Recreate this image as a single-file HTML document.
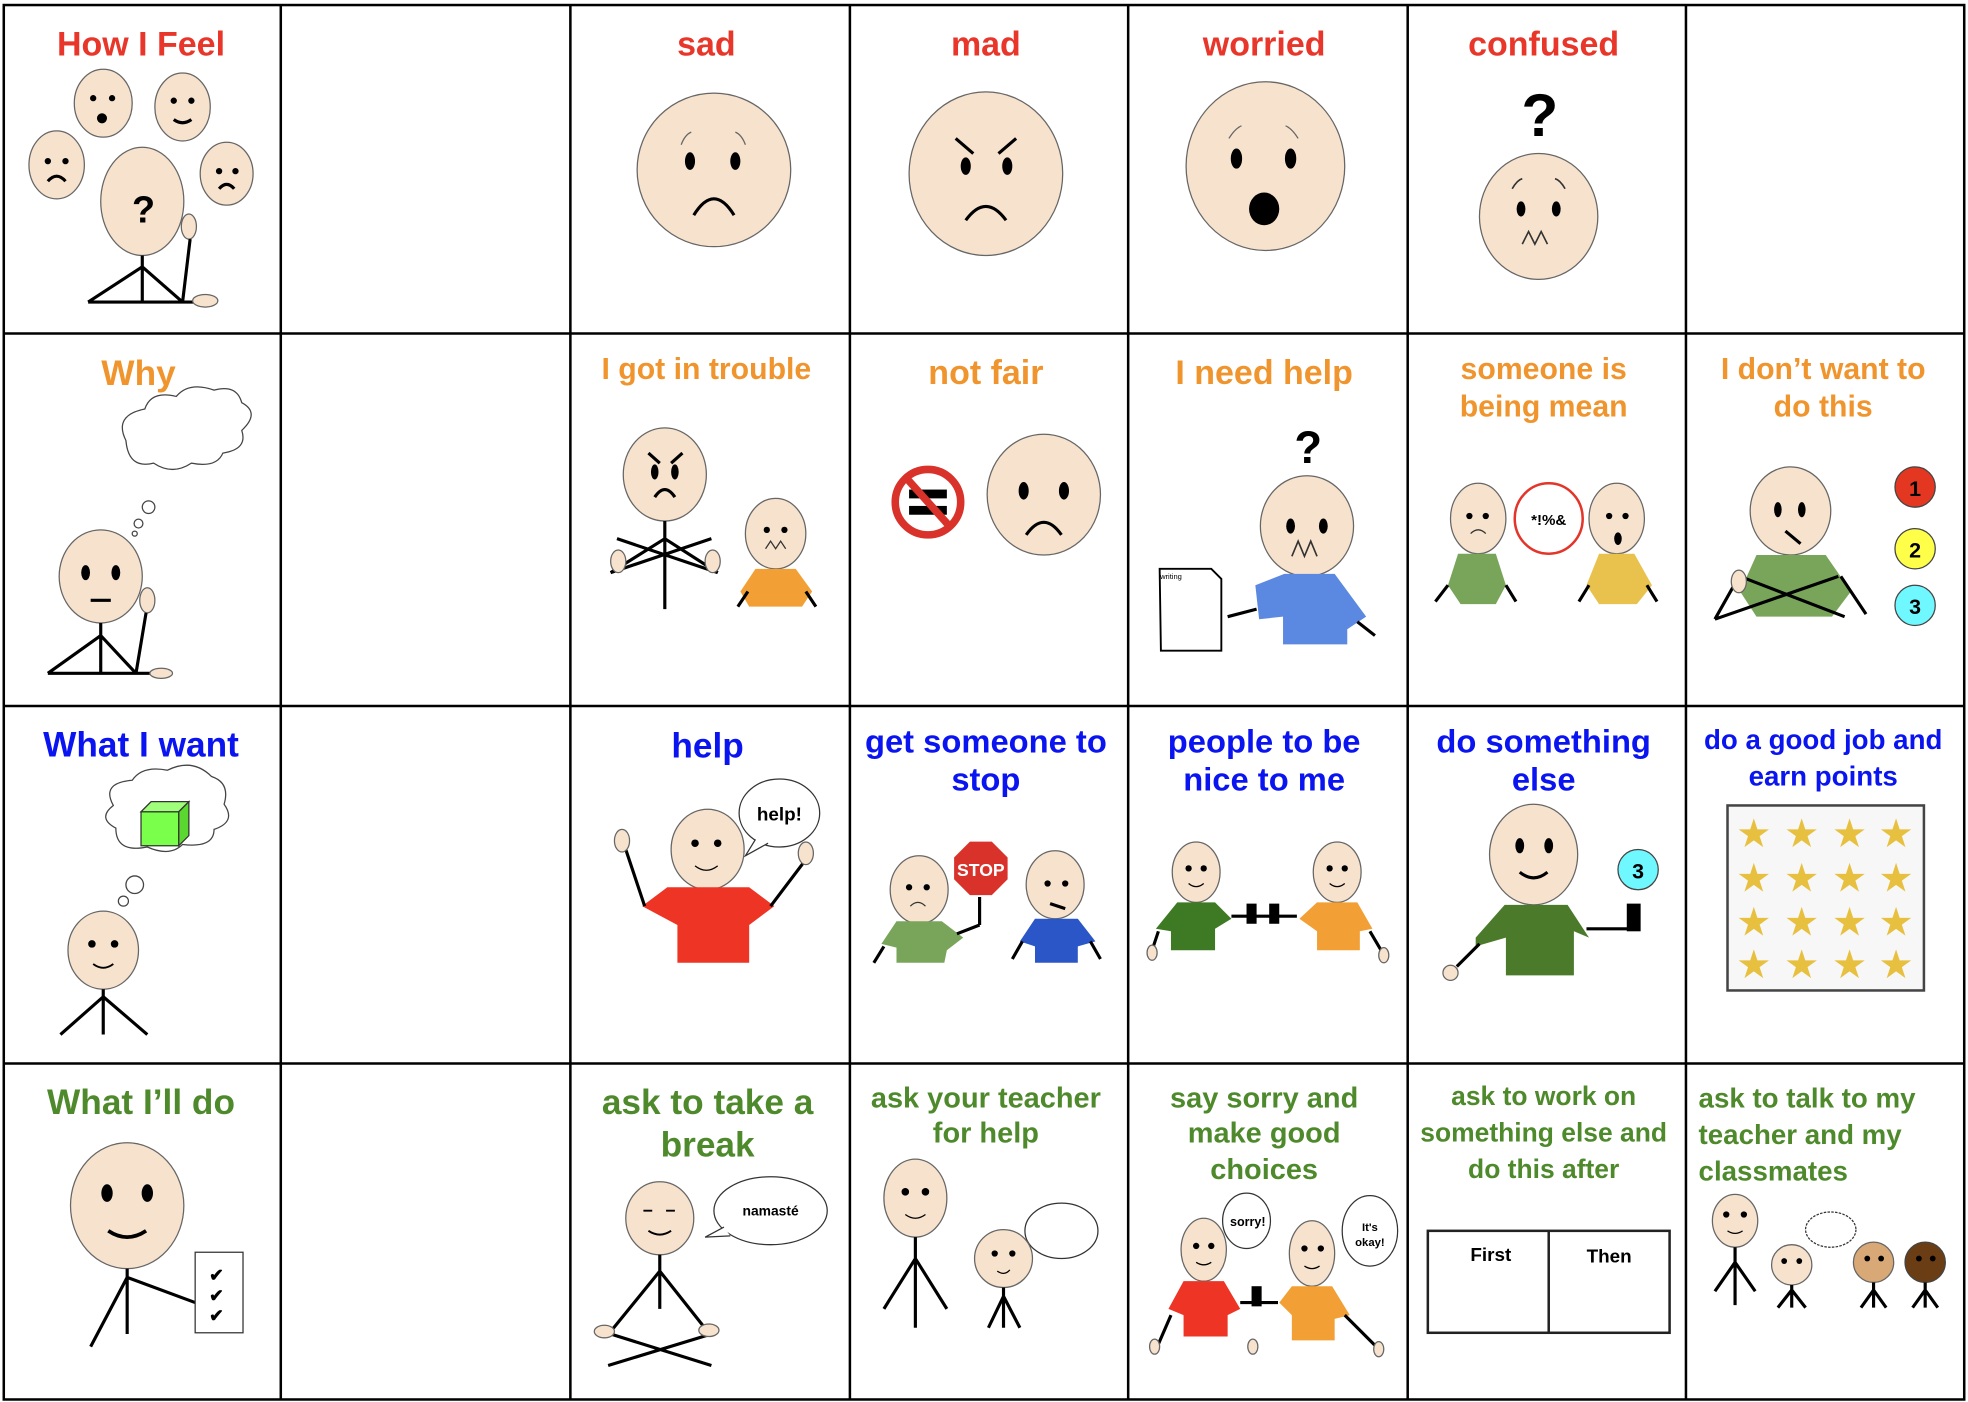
<!DOCTYPE html>
<html><head><meta charset="utf-8"><style>
html,body{margin:0;padding:0;background:#fff}
svg{display:block}
text{font-family:"Liberation Sans",sans-serif;font-weight:bold;text-anchor:middle}
.r{fill:#e8372a;font-size:27px}.o{fill:#f0952e;font-size:24px}.b{fill:#0a14f0;font-size:26px}.g{fill:#4e8a2c;font-size:25px}
.f{fill:#f7e3cd;stroke:#666;stroke-width:1}
.l{stroke:#000;stroke-width:2.5;fill:none}
</style></head><body>
<svg width="1968" height="1402" viewBox="0 0 1563 1114" preserveAspectRatio="none" xmlns="http://www.w3.org/2000/svg">
<rect width="1563" height="1114" fill="#fff"/>
<g stroke="#000" stroke-width="2" fill="none">
<rect x="3" y="4" width="1557" height="1108"/>
<line x1="223" y1="4" x2="223" y2="1112"/><line x1="453" y1="4" x2="453" y2="1112"/><line x1="675" y1="4" x2="675" y2="1112"/><line x1="896" y1="4" x2="896" y2="1112"/><line x1="1118" y1="4" x2="1118" y2="1112"/><line x1="1339" y1="4" x2="1339" y2="1112"/>
<line x1="3" y1="265" x2="1560" y2="265"/><line x1="3" y1="561" x2="1560" y2="561"/><line x1="3" y1="845" x2="1560" y2="845"/>
</g>
<!-- Row 1 -->
<text class="r" x="112" y="44">How I Feel</text>
<ellipse class="f" cx="82" cy="82" rx="23" ry="27"/><circle cx="74" cy="78" r="2.5"/><circle cx="89" cy="78" r="2.5"/><circle cx="81" cy="94" r="4"/>
<ellipse class="f" cx="145" cy="85" rx="22" ry="27"/><circle cx="138" cy="80" r="2.5"/><circle cx="152" cy="80" r="2.5"/><path d="M138 95 q7 5 14 0" class="l" stroke-width="1"/>
<ellipse class="f" cx="45" cy="131" rx="22" ry="27"/><circle cx="38" cy="128" r="2.5"/><circle cx="52" cy="128" r="2.5"/><path d="M38 144 q7 -8 14 0" class="l" stroke-width="1"/>
<ellipse class="f" cx="180" cy="138" rx="21" ry="25"/><circle cx="174" cy="136" r="2.5"/><circle cx="187" cy="136" r="2.5"/><path d="M174 150 q6 -7 12 0" class="l" stroke-width="1"/>
<ellipse class="f" cx="113" cy="160" rx="33" ry="43"/><text x="114" y="177" style="font-size:30px;fill:#000">?</text>
<ellipse class="f" cx="150" cy="180" rx="6" ry="10"/>
<path class="l" d="M113 203 V240 M113 212 L70 240 M113 212 L145 240 M70 240 H160 M145 240 L151 190"/><ellipse class="f" cx="163" cy="239" rx="10" ry="5"/>
<text class="r" x="561" y="44">sad</text>
<circle class="f" cx="567" cy="135" r="61"/><ellipse cx="548" cy="128" rx="4" ry="7"/><ellipse cx="584" cy="128" rx="4" ry="7"/><path class="l" d="M551 171 q16 -26 32 0" stroke-width="2"/><path d="M541 115 q3 -8 8 -10 M584 105 q5 2 8 10" stroke="#666" fill="none"/>
<text class="r" x="783" y="44">mad</text>
<ellipse class="f" cx="783" cy="138" rx="61" ry="65"/><ellipse cx="767" cy="132" rx="4" ry="7"/><ellipse cx="800" cy="132" rx="4" ry="7"/><path class="l" d="M767 175 q16 -22 32 0" stroke-width="2"/><path class="l" d="M759 110 L773 122 M807 110 L793 122" stroke-width="1.5"/>
<text class="r" x="1004" y="44">worried</text>
<ellipse class="f" cx="1005" cy="132" rx="63" ry="67"/><ellipse cx="982" cy="126" rx="4.5" ry="8"/><ellipse cx="1025" cy="126" rx="4.5" ry="8"/><ellipse cx="1004" cy="166" rx="12" ry="13"/><path d="M976 110 q5 -8 10 -10 M1021 100 q5 2 10 10" stroke="#666" fill="none"/>
<text class="r" x="1226" y="44">confused</text>
<text x="1223" y="108" style="font-size:48px;fill:#000">?</text>
<ellipse class="f" cx="1222" cy="172" rx="47" ry="50"/><ellipse cx="1208" cy="166" rx="3.5" ry="6"/><ellipse cx="1236" cy="166" rx="3.5" ry="6"/><path d="M1209 194 l5 -10 l5 10 l5 -10 l5 10 M1201 150 q4 -7 8 -8 M1235 142 q4 1 8 8" stroke="#333" stroke-width="1.3" fill="none"/>
<!-- Row 2 -->
<text class="o" x="110" y="306" style="font-size:28px">Why</text>
<path d="M100 350 q-10 -20 15 -25 q5 -15 25 -10 q10 -12 30 -5 q18 -5 22 10 q15 8 0 22 q5 15 -15 18 q-5 12 -25 8 q-15 10 -30 0 q-20 5 -22 -18z" fill="#fff" stroke="#444"/>
<circle cx="118" cy="403" r="5" fill="#fff" stroke="#444"/><circle cx="110" cy="416" r="3.5" fill="#fff" stroke="#444"/><circle cx="107" cy="424" r="2" fill="#fff" stroke="#444"/>
<ellipse class="f" cx="80" cy="458" rx="33" ry="37"/><ellipse cx="68" cy="455" rx="3.5" ry="6"/><ellipse cx="92" cy="455" rx="3.5" ry="6"/><path class="l" d="M72 477 H88" stroke-width="2"/>
<ellipse class="f" cx="117" cy="477" rx="6" ry="10"/>
<path class="l" d="M80 495 V535 M80 505 L38 535 M80 505 L108 535 M38 535 H125 M108 535 L116 487"/><ellipse class="f" cx="128" cy="535" rx="9" ry="4"/>
<text class="o" x="561" y="301">I got in trouble</text>
<ellipse class="f" cx="528" cy="377" rx="33" ry="37"/><ellipse cx="520" cy="375" rx="3" ry="6"/><ellipse cx="536" cy="375" rx="3" ry="6"/><path class="l" d="M520 395 q8 -12 16 0 M515 360 l9 8 M542 360 l-9 8" stroke-width="1.5"/>
<path class="l" d="M528 414 V484 M528 428 L485 455 L565 428 M528 428 L570 455 L490 428"/><ellipse class="f" cx="491" cy="446" rx="6" ry="9"/><ellipse class="f" cx="566" cy="446" rx="6" ry="9"/>
<ellipse class="f" cx="616" cy="424" rx="24" ry="28"/><circle cx="609" cy="421" r="2.5"/><circle cx="623" cy="421" r="2.5"/><path d="M608 436 l4 -6 l4 6 l4 -6 l4 6" stroke="#333" fill="none"/>
<polygon points="600,452 632,452 645,470 637,482 630,482 630,482 600,482 595,482 588,470" fill="#f2a035"/><path class="l" d="M594 470 L586 482 M640 470 L648 482" stroke-width="2"/>
<text class="o" x="783" y="305" style="font-size:27px">not fair</text>
<circle cx="737" cy="399" r="26" fill="#fff" stroke="#d8322b" stroke-width="6"/><rect x="722" y="389" width="30" height="7"/><rect x="722" y="402" width="30" height="7"/><line x1="720" y1="380" x2="754" y2="418" stroke="#d8322b" stroke-width="6"/>
<ellipse class="f" cx="829" cy="393" rx="45" ry="48"/><ellipse cx="813" cy="390" rx="4" ry="7"/><ellipse cx="845" cy="390" rx="4" ry="7"/><path class="l" d="M815 425 q14 -20 28 0" stroke-width="2"/>
<text class="o" x="1004" y="305" style="font-size:27px">I need help</text>
<text x="1039" y="368" style="font-size:36px;fill:#000">?</text>
<ellipse class="f" cx="1038" cy="418" rx="37" ry="40"/><ellipse cx="1025" cy="418" rx="3.5" ry="6"/><ellipse cx="1051" cy="418" rx="3.5" ry="6"/><path d="M1026 442 l5 -12 l5 12 l5 -12 l5 12" stroke="#333" stroke-width="1.3" fill="none"/>
<polygon points="1020,456 1060,456 1085,490 1070,500 1070,512 1019,512 1019,490 1000,492 997,465" fill="#5b88e0"/>
<path class="l" d="M975 490 L998 484 M1078 494 L1092 505"/>
<path d="M921 452 H962 L970 460 V517 H922z" fill="#fff" stroke="#000" stroke-width="1.5"/><text x="930" y="460" style="font-size:6px;font-weight:normal;fill:#000">writing</text>
<text class="o" x="1226" y="301">someone is</text><text class="o" x="1226" y="331">being mean</text>
<ellipse class="f" cx="1174" cy="412" rx="22" ry="28"/><circle cx="1167" cy="410" r="2.5"/><circle cx="1180" cy="410" r="2.5"/><path d="M1168 424 q6 -6 12 0" stroke="#333" fill="none"/>
<polygon points="1158,440 1188,440 1196,465 1188,480 1160,480 1150,465" fill="#79a55a"/><path class="l" d="M1150 465 L1140 478 M1196 465 L1204 478" stroke-width="2"/>
<ellipse cx="1230" cy="412" rx="27" ry="28" fill="#fff" stroke="#e3352a" stroke-width="2"/><text x="1230" y="417" style="font-size:12px;fill:#000">*!%&amp;</text>
<ellipse class="f" cx="1284" cy="412" rx="22" ry="28"/><circle cx="1278" cy="410" r="2.5"/><circle cx="1291" cy="410" r="2.5"/><ellipse cx="1285" cy="428" rx="3" ry="5"/>
<polygon points="1270,440 1298,440 1312,465 1300,480 1270,480 1260,465" fill="#e8c24d"/><path class="l" d="M1262 465 L1254 478 M1308 465 L1316 478" stroke-width="2"/>
<text class="o" x="1448" y="301">I don’t want to</text><text class="o" x="1448" y="331">do this</text>
<ellipse class="f" cx="1422" cy="406" rx="32" ry="35"/><ellipse cx="1412" cy="405" rx="3" ry="6"/><ellipse cx="1431" cy="405" rx="3" ry="6"/><path class="l" d="M1418 422 L1430 432" stroke-width="2"/>
<polygon points="1395,441 1450,441 1470,470 1455,490 1395,490 1382,470" fill="#79a55a"/>
<path class="l" d="M1382 458 L1465 490 M1460 458 L1362 492 M1362 492 L1380 460 M1462 458 L1482 488"/><ellipse class="f" cx="1381" cy="462" rx="6" ry="9"/>
<circle cx="1521" cy="387" r="16" fill="#e33722" stroke="#444"/><text x="1521" y="394" style="font-size:17px;fill:#000">1</text>
<circle cx="1521" cy="436" r="16" fill="#ffff4a" stroke="#444"/><text x="1521" y="443" style="font-size:17px;fill:#000">2</text>
<circle cx="1521" cy="481" r="16" fill="#6ff8ff" stroke="#444"/><text x="1521" y="488" style="font-size:17px;fill:#000">3</text>
<!-- Row 3 -->
<text class="b" x="112" y="601" style="font-size:28px">What I want</text>
<path d="M90 640 q-10 -18 15 -20 q8 -12 28 -8 q20 -10 35 5 q15 5 10 22 q10 14 -8 20 q0 15 -25 12 q-10 10 -28 2 q-25 5 -25 -15 q-15 -8 -2 -18z" fill="#fff" stroke="#444"/>
<polygon points="112,645 142,645 142,672 112,672" fill="#7aff4a" stroke="#333"/><polygon points="112,645 120,637 150,637 142,645" fill="#9fff7a" stroke="#333"/><polygon points="142,645 150,637 150,664 142,672" fill="#5bd830" stroke="#333"/>
<circle cx="107" cy="703" r="7" fill="#fff" stroke="#444"/><circle cx="98" cy="716" r="4" fill="#fff" stroke="#444"/>
<ellipse class="f" cx="82" cy="755" rx="28" ry="31"/><circle cx="73" cy="750" r="3"/><circle cx="91" cy="750" r="3"/><path d="M74 766 q8 6 16 0" stroke="#000" stroke-width="1.5" fill="none"/>
<path class="l" d="M82 786 V822 M82 792 L48 822 M82 792 L117 822" stroke-width="2"/>
<text class="b" x="562" y="602" style="font-size:28px">help</text>
<ellipse cx="619" cy="646" rx="32" ry="27" fill="#fff" stroke="#333"/><path d="M600 667 L592 680 L610 670" fill="#fff" stroke="#333"/><text x="619" y="652" style="font-size:15px;fill:#000">help!</text>
<ellipse class="f" cx="562" cy="675" rx="29" ry="32"/><circle cx="552" cy="670" r="3"/><circle cx="570" cy="670" r="3"/><path d="M552 688 q9 7 18 0" stroke="#000" fill="none"/>
<polygon points="530,705 595,705 615,720 595,735 595,765 538,765 538,735 510,720" fill="#ee3424"/>
<path class="l" d="M512 720 L497 675 M612 720 L640 683"/><ellipse class="f" cx="494" cy="668" rx="6" ry="9"/><ellipse class="f" cx="640" cy="678" rx="6" ry="9"/>
<text class="b" x="783" y="598">get someone to</text><text class="b" x="783" y="628">stop</text>
<ellipse class="f" cx="730" cy="707" rx="23" ry="27"/><circle cx="722" cy="705" r="2.5"/><circle cx="736" cy="705" r="2.5"/><path d="M723 720 q6 -6 12 0" stroke="#333" fill="none"/>
<polygon points="712,732 748,732 765,745 752,755 750,765 712,765 712,753 700,750" fill="#79a55a"/><path class="l" d="M702 752 L694 765 M760 742 L778 735 M778 710 V735" stroke-width="2"/>
<polygon points="770,668 788,668 801,681 801,699 788,712 770,712 757,699 757,681" fill="#d8322b" stroke="#fff" stroke-width="1.5"/><text x="779" y="696" style="font-size:14px;fill:#fff">STOP</text>
<ellipse class="f" cx="838" cy="703" rx="23" ry="27"/><circle cx="832" cy="702" r="2.5"/><circle cx="846" cy="702" r="2.5"/><path class="l" d="M834 718 L846 722" stroke-width="1.5"/>
<polygon points="822,730 856,730 870,748 856,752 856,765 822,765 822,752 810,748" fill="#2a56c8"/><path class="l" d="M812 748 L804 762 M866 748 L874 762" stroke-width="2"/>
<text class="b" x="1004" y="598">people to be</text><text class="b" x="1004" y="628">nice to me</text>
<ellipse class="f" cx="950" cy="693" rx="19" ry="24"/><circle cx="944" cy="690" r="2.5"/><circle cx="956" cy="690" r="2.5"/><path d="M944 702 q6 5 12 0" stroke="#000" fill="none"/>
<polygon points="935,717 965,717 978,730 965,738 965,755 930,755 930,740 918,738" fill="#3e7a23"/>
<ellipse class="f" cx="1062" cy="693" rx="19" ry="24"/><circle cx="1056" cy="690" r="2.5"/><circle cx="1068" cy="690" r="2.5"/><path d="M1056 702 q6 5 12 0" stroke="#000" fill="none"/>
<polygon points="1046,717 1078,717 1090,738 1080,740 1080,755 1046,755 1046,740 1032,730" fill="#f2a035"/>
<path class="l" d="M978 728 H1030 M920 740 L915 755 M1088 740 L1098 757" stroke-width="2"/><rect x="990" y="718" width="8" height="16"/><rect x="1008" y="718" width="8" height="16"/>
<ellipse class="f" cx="915" cy="757" rx="4" ry="6"/><ellipse class="f" cx="1099" cy="759" rx="4" ry="6"/>
<text class="b" x="1226" y="598">do something</text><text class="b" x="1226" y="628">else</text>
<ellipse class="f" cx="1218" cy="679" rx="35" ry="40"/><ellipse cx="1207" cy="672" rx="3.5" ry="6"/><ellipse cx="1230" cy="672" rx="3.5" ry="6"/><path d="M1207 693 q11 9 22 0" stroke="#000" stroke-width="2.5" fill="none"/>
<polygon points="1195,719 1245,719 1262,745 1250,740 1250,775 1196,775 1196,745 1172,752 1172,745" fill="#4c7a2b"/>
<path class="l" d="M1175 750 L1157 768 M1260 738 H1295" stroke-width="2"/><rect x="1292" y="718" width="11" height="22"/><ellipse class="f" cx="1152" cy="773" rx="6" ry="6"/>
<circle cx="1301" cy="691" r="16" fill="#6ff8ff" stroke="#444"/><text x="1301" y="698" style="font-size:17px;fill:#000">3</text>
<text class="b" x="1448" y="595" style="font-size:22px">do a good job and</text><text class="b" x="1448" y="624" style="font-size:22px">earn points</text>
<rect x="1372" y="640" width="156" height="147" fill="#f7f7f7" stroke="#444" stroke-width="2"/>
<g fill="#e8c040" font-size="28" style="font-family:'DejaVu Sans',sans-serif">
<text x="1393" y="672">★</text><text x="1431" y="672">★</text><text x="1469" y="672">★</text><text x="1506" y="672">★</text>
<text x="1393" y="707">★</text><text x="1431" y="707">★</text><text x="1469" y="707">★</text><text x="1506" y="707">★</text>
<text x="1393" y="742">★</text><text x="1431" y="742">★</text><text x="1469" y="742">★</text><text x="1506" y="742">★</text>
<text x="1393" y="776">★</text><text x="1431" y="776">★</text><text x="1469" y="776">★</text><text x="1506" y="776">★</text></g>
<!-- Row 4 -->
<text class="g" x="112" y="885" style="font-size:28px">What I’ll do</text>
<ellipse class="f" cx="101" cy="958" rx="45" ry="50"/><ellipse cx="85" cy="948" rx="4.5" ry="7"/><ellipse cx="117" cy="948" rx="4.5" ry="7"/><path d="M86 978 q15 10 30 0" stroke="#000" stroke-width="3" fill="none"/>
<path class="l" d="M101 1008 V1060 M101 1015 L72 1070 M101 1015 L155 1035"/>
<rect x="155" y="995" width="38" height="64" fill="#fff" stroke="#333"/><text x="172" y="1018" style="font-size:14px;fill:#000">✔</text><text x="172" y="1034" style="font-size:14px;fill:#000">✔</text><text x="172" y="1050" style="font-size:14px;fill:#000">✔</text>
<text class="g" x="562" y="885" style="font-size:28px">ask to take a</text><text class="g" x="562" y="919" style="font-size:28px">break</text>
<ellipse cx="612" cy="962" rx="45" ry="27" fill="#fff" stroke="#333"/><path d="M575 975 L560 983 L580 982" fill="#fff" stroke="#333"/><text x="612" y="966" style="font-size:11px;fill:#000">namasté</text>
<ellipse class="f" cx="524" cy="968" rx="27" ry="29"/><path d="M511 962 h7 M529 962 h7 M515 978 q9 6 18 0" stroke="#000" stroke-width="1.5" fill="none"/>
<path class="l" d="M524 997 V1040 M524 1010 L485 1058 M524 1010 L562 1058 M485 1060 L565 1085 M565 1060 L483 1085" stroke-width="2.5"/><ellipse class="f" cx="480" cy="1058" rx="8" ry="5"/><ellipse class="f" cx="563" cy="1057" rx="8" ry="5"/>
<text class="g" x="783" y="880" style="font-size:23px">ask your teacher</text><text class="g" x="783" y="908" style="font-size:23px">for help</text>
<ellipse class="f" cx="727" cy="952" rx="25" ry="31"/><circle cx="719" cy="947" r="3"/><circle cx="735" cy="947" r="3"/><path d="M719 965 q8 6 16 0" stroke="#000" fill="none"/>
<path class="l" d="M727 983 V1055 M727 1000 L702 1040 M727 1000 L752 1040" stroke-width="1.5"/>
<ellipse cx="843" cy="978" rx="29" ry="22" fill="#fff" stroke="#333"/>
<circle class="f" cx="797" cy="1000" r="23"/><circle cx="790" cy="996" r="2.5"/><circle cx="804" cy="996" r="2.5"/><path d="M792 1010 q6 4 10 -1" stroke="#000" fill="none"/>
<path class="l" d="M797 1023 V1055 M797 1030 L785 1055 M797 1030 L810 1055" stroke-width="1.5"/>
<text class="g" x="1004" y="880" style="font-size:23px">say sorry and</text><text class="g" x="1004" y="908" style="font-size:23px">make  good</text><text class="g" x="1004" y="937" style="font-size:23px">choices</text>
<ellipse cx="990" cy="970" rx="19" ry="22" fill="#fff" stroke="#333"/><text x="991" y="974" style="font-size:10px;fill:#000">sorry!</text>
<ellipse cx="1088" cy="978" rx="22" ry="28" fill="#fff" stroke="#333"/><text x="1088" y="978" style="font-size:9px;fill:#000">It's</text><text x="1088" y="990" style="font-size:9px;fill:#000">okay!</text>
<ellipse class="f" cx="956" cy="993" rx="18" ry="25"/><circle cx="950" cy="990" r="2.5"/><circle cx="962" cy="990" r="2.5"/><path d="M950 1003 q6 4 12 0" stroke="#000" fill="none"/>
<polygon points="940,1018 972,1018 985,1040 975,1045 975,1062 940,1062 940,1045 928,1040" fill="#ee3424"/>
<ellipse class="f" cx="1042" cy="996" rx="18" ry="26"/><circle cx="1036" cy="992" r="2.5"/><circle cx="1049" cy="992" r="2.5"/><path d="M1036 1006 q6 4 12 0" stroke="#000" fill="none"/>
<polygon points="1026,1022 1058,1022 1072,1045 1060,1048 1060,1065 1026,1065 1026,1045 1016,1035" fill="#f2a035"/>
<path class="l" d="M985 1035 H1015 M930 1045 L920 1068 M1068 1045 L1093 1070" stroke-width="2"/><rect x="994" y="1022" width="8" height="16"/>
<ellipse class="f" cx="917" cy="1070" rx="4" ry="6"/><ellipse class="f" cx="995" cy="1070" rx="4" ry="6"/><ellipse class="f" cx="1095" cy="1072" rx="4" ry="6"/>
<text class="g" x="1226" y="878" style="font-size:21px">ask to work on</text><text class="g" x="1226" y="907" style="font-size:21px">something else and</text><text class="g" x="1226" y="936" style="font-size:21px">do this after</text>
<rect x="1134" y="978" width="192" height="81" fill="#fff" stroke="#222" stroke-width="2"/><line x1="1230" y1="978" x2="1230" y2="1059" stroke="#222" stroke-width="2"/>
<text x="1184" y="1002" style="font-size:15px;fill:#000">First</text><text x="1278" y="1003" style="font-size:15px;fill:#000">Then</text>
<g style="text-anchor:start"><text class="g" x="1349" y="880" style="font-size:22px;text-anchor:start">ask to talk to my</text><text class="g" x="1349" y="909" style="font-size:22px;text-anchor:start">teacher and my</text><text class="g" x="1349" y="938" style="font-size:22px;text-anchor:start">classmates</text></g>
<ellipse class="f" cx="1378" cy="970" rx="18" ry="21"/><circle cx="1371" cy="965" r="2.5"/><circle cx="1385" cy="965" r="2.5"/><path d="M1372 978 q6 4 12 0" stroke="#000" fill="none"/>
<path class="l" d="M1378 991 V1037 M1378 1003 L1362 1026 M1378 1003 L1394 1026" stroke-width="1.5"/>
<ellipse cx="1454" cy="977" rx="20" ry="14" fill="#fff" stroke="#333" stroke-dasharray="2 1"/>
<circle class="f" cx="1423" cy="1005" r="16"/><circle cx="1417" cy="1002" r="2.3"/><circle cx="1429" cy="1002" r="2.3"/>
<path class="l" d="M1423 1021 V1039 M1423 1025 L1412 1039 M1423 1025 L1434 1039" stroke-width="1.5"/>
<circle cx="1488" cy="1003" r="16" fill="#d8a877" stroke="#666"/><circle cx="1483" cy="1000" r="2.3"/><circle cx="1494" cy="1000" r="2.3"/>
<path class="l" d="M1488 1019 V1039 M1488 1025 L1478 1039 M1488 1025 L1498 1039" stroke-width="1.5"/>
<circle cx="1529" cy="1003" r="16" fill="#6b3d14" stroke="#444"/><circle cx="1524" cy="1000" r="2.3"/><circle cx="1535" cy="1000" r="2.3"/>
<path class="l" d="M1529 1019 V1039 M1529 1025 L1519 1039 M1529 1025 L1539 1039" stroke-width="1.5"/>
</svg>
</body></html>
